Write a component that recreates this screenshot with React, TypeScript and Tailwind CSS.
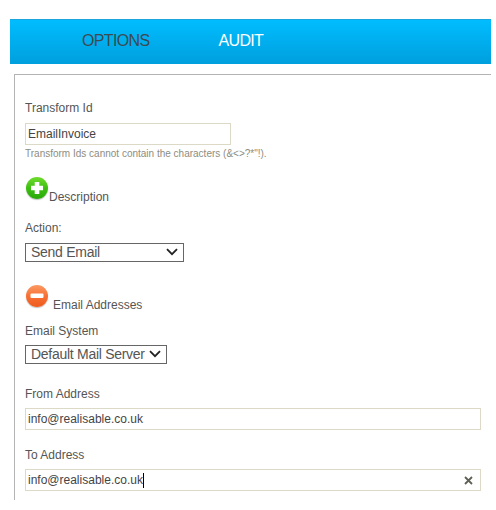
const Chevron = () => (
  <svg width="12" height="8" viewBox="0 0 12 8" fill="none" className="-mt-px shrink-0">
    <path d="M1 1.2 L6 6.2 L11 1.2" stroke="#222" strokeWidth="1.8" />
  </svg>
);

const RoundIcon = ({ kind }: { kind: "plus" | "minus" }) => (
  <div
    className={
      kind === "plus"
        ? "relative ml-px size-[22px] shrink-0 rounded-full bg-gradient-to-b from-[#6fdc2c] via-[#3cc010] to-[#2aa808] shadow-[0_1px_1px_rgba(0,0,0,0.25)]"
        : "relative ml-px size-[22px] shrink-0 rounded-full bg-gradient-to-b from-[#fb9a62] via-[#f77034] to-[#ee5a1e] shadow-[0_1px_1px_rgba(0,0,0,0.25)]"
    }
  >
    {kind === "plus" ? (
      <svg width="22" height="22" viewBox="0 0 22 22" className="absolute inset-0">
        <path d="M8.7 5h4.6v3.7H17v4.6h-3.7V17H8.7v-3.7H5V8.7h3.7z" fill="#fff" />
      </svg>
    ) : (
      <svg width="22" height="22" viewBox="0 0 22 22" className="absolute inset-0">
        <rect x="4.5" y="8.5" width="13" height="4.5" rx="1" fill="#fff" />
      </svg>
    )}
  </div>
);

const Label = ({ children, className }: { children: string; className?: string }) => (
  <div className={"text-[12px] leading-[14px] text-[#555] " + (className ?? "")}>{children}</div>
);

const FakeSelect = ({ text, className }: { text: string; className: string }) => (
  <div className={"flex h-[19px] items-center justify-between border border-[#666] bg-white pl-[5px] pr-[5px] text-[14px] tracking-[-0.28px] text-[#555] " + className}>
    <span className="whitespace-nowrap">{text}</span>
    <Chevron />
  </div>
);

export default function App() {
  return (
    <div className="h-[510px] w-[496px] overflow-hidden bg-white pl-[10px] pr-[5px] pt-[19px] font-['Liberation_Sans',Arial,sans-serif]">
      <div className="flex h-[45px] items-center border-t border-[#1aa5dc] bg-gradient-to-b from-[#00bdff] to-[#009fdd] pb-[2px] pl-[72px] text-[16px] tracking-[-0.65px]">
        <span className="text-[#3c4a50]">OPTIONS</span>
        <span className="ml-[69px] text-white">AUDIT</span>
      </div>

      <div className="ml-[4px] mt-[10px] h-[426px] border-l border-t border-[#b4b4b4] pl-[10px] pr-[10px] pt-[26px]">
        <Label>Transform Id</Label>
        <div className="mt-[8px] flex h-[22px] w-[206px] items-center border border-[#dcd9c6] pl-[2px] text-[12px] text-[#444]">
          EmailInvoice
        </div>
        <div className="mt-[3px] text-[10px] leading-[11px] text-[#8d8d7f]">
          Transform Ids cannot contain the characters (&amp;&lt;&gt;?*"!).
        </div>

        <div className="mt-[18px] flex items-start">
          <RoundIcon kind="plus" />
          <Label className="ml-px mt-[13px]">Description</Label>
        </div>

        <Label className="mt-[17px]">Action:</Label>
        <FakeSelect text="Send Email" className="mt-[8px] w-[159px]" />

        <div className="mt-[23px] flex items-start">
          <RoundIcon kind="minus" />
          <Label className="ml-[5px] mt-[13px]">Email Addresses</Label>
        </div>

        <Label className="mt-[12px]">Email System</Label>
        <FakeSelect text="Default Mail Server" className="mt-[7px] w-[142px]" />

        <Label className="mt-[23px]">From Address</Label>
        <div className="mt-[7px] flex h-[22px] w-[456px] items-center border border-[#dcd9c6] pl-[2px] text-[12px] text-[#444]">
          info@realisable.co.uk
        </div>

        <Label className="mt-[18px]">To Address</Label>
        <div className="mt-[7px] flex h-[22px] w-[456px] items-center justify-between border border-[#dcd9c6] pl-[2px] pr-[7px] text-[12px] text-[#444]">
          <span className="flex items-center">
            info@realisable.co.uk
            <span className="h-[15px] w-px bg-black" />
          </span>
          <svg width="9" height="9" viewBox="0 0 9 9">
            <path d="M1 1 L8 8 M8 1 L1 8" stroke="#5f5f55" strokeWidth="1.8" />
          </svg>
        </div>
      </div>
    </div>
  );
}
